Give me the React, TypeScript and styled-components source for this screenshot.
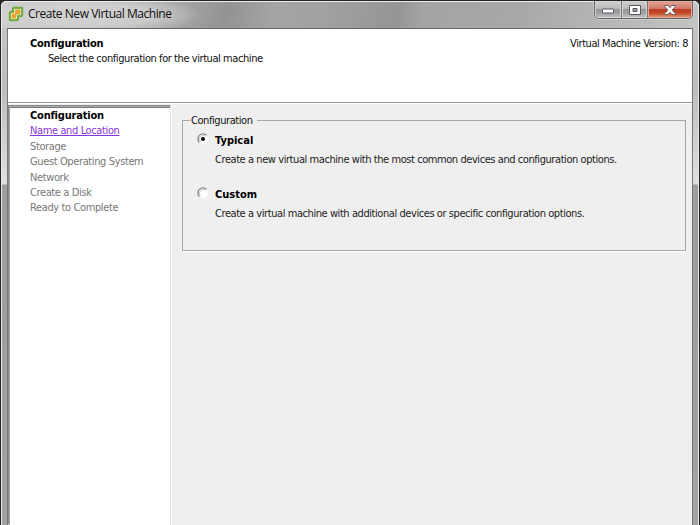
import React from 'react';
import styled, { createGlobalStyle } from 'styled-components';

const GlobalStyle = createGlobalStyle`
  * { box-sizing: border-box; }
  html, body { margin: 0; width: 700px; height: 525px; overflow: hidden; }
  body { font: 11px/15px "DejaVu Sans Condensed", "DejaVu Sans", sans-serif; font-stretch: condensed; color: #101010; background: #242222; }
`;

const Window = styled.div`
  width: 700px;
  height: 525px;
  display: flex;
  flex-direction: column;
  overflow: hidden;
  background: #efefef;
  border: solid #242222;
  border-width: 1px 1px 0;
  border-radius: 6px 6px 0 0;
`;

const TitleBar = styled.header`
  height: 27px;
  flex: none;
  display: flex;
  align-items: flex-start;
  padding: 0 5px 0 7px;
  border: solid #eeeeee;
  border-width: 1px 1px 0;
  border-radius: 5px 5px 0 0;
  background:
    radial-gradient(ellipse 110px 20px at 90px 13px, #d8d8d8d0 0, #d4d4d4c0 55%, #cccccc00 100%),
    linear-gradient(105deg, #cfcfcf, #a7a7a7 170px, #939393 220px, #a4a4a4 265px, #a2a2a2 310px, #959595 385px, #a4a4a4 410px, #a8a8a8 500px, #b8b8b8 600px, #c4c4c4);
`;

const AppIcon = styled.svg`
  width: 16px;
  height: 16px;
  margin: 4px 4px 0 -1px;
`;

const Title = styled.div`
  flex: 1;
  padding-top: 3px;
  font: 12px/17px "Open Sans", "Noto Sans", sans-serif;
  letter-spacing: -0.46px;
  white-space: nowrap;
  color: #111;
`;

const Controls = styled.div`
  display: flex;
  height: 18px;
  margin: -1px 0 0;
  border: 1px solid #686666;
  border-top: 0;
  border-radius: 0 0 5px 5px;
  overflow: hidden;
  box-shadow: 0 0 0 1px #d7d7d780;
`;

const ControlButton = styled.button<{ $close?: boolean; $width: number }>`
  width: ${p => p.$width}px;
  padding: 0;
  display: flex;
  align-items: center;
  justify-content: center;
  border: 1px solid ${p => (p.$close ? '#e3a798' : '#d4d4d4')};
  background: ${p => p.$close
    ? 'linear-gradient(#dfa093, #d17765 45%, #bd3c25 50%, #c34a2c 75%, #df9270)'
    : 'linear-gradient(#cecece, #b9b9b9 45%, #979797 50%, #a2a2a2 75%, #bebebe)'};
  & + & { box-shadow: -1px 0 #777; margin-left: 1px; }
`;

const Frame = styled.div`
  flex: 1;
  min-height: 0;
  display: flex;
`;

const Edge = styled.div<{ $side: 'left' | 'right' }>`
  width: 7px;
  flex: none;
  border: solid;
  border-width: 0 1px;
  border-left-color: ${p => (p.$side === 'left' ? '#e8e8e8' : '#777777')};
  border-right-color: ${p => (p.$side === 'left' ? '#777777' : '#e8e8e8')};
  background: linear-gradient(#c4c4c4 0, #bdbdbd 60px, #e0dfdf 156px, #9f9d9d 157px, #a3a1a1 100%);
`;

const Client = styled.main`
  flex: 1;
  min-width: 0;
  display: flex;
  flex-direction: column;
  border-top: 1px solid #656565;
`;

const PageHeader = styled.section`
  height: 74px;
  flex: none;
  display: flex;
  justify-content: space-between;
  padding: 7px 4px 0 22px;
  background: white;
  border-bottom: 1px solid #999;
  box-shadow: 0 1px white;
`;

const Text = styled.div<{ $indent?: number }>`
  letter-spacing: -0.43px;
  padding-left: ${p => p.$indent ?? 0}px;
  white-space: nowrap;
`;

const Strong = styled(Text)`
  font-weight: bold;
  letter-spacing: -0.24px;
  color: #000;
`;

const OptionTitle = styled(Strong)`
  letter-spacing: 0;
`;

const Body = styled.div`
  flex: 1;
  min-height: 0;
  display: flex;
  padding-top: 3px;
`;

const Sidebar = styled.nav`
  width: 164px;
  flex: none;
  background: white;
  border-left: 1px solid #e3e3e3;
  border-right: 1px solid #fff;
`;

const Steps = styled.div`
  height: 100%;
  padding: 1px 0 0 20px;
  border: solid #a8a8a8;
  border-width: 1px 1px 0;
  border-right-color: #e0e0e0;
  box-shadow: inset 0 1px #777, -1px -1px #8a8a8a;
`;

const Step = styled(Text)`
  height: 15.4px;
  letter-spacing: -0.38px;
  color: #777;
`;

const CurrentStep = styled(Step)`
  font-weight: bold;
  letter-spacing: -0.2px;
  color: #000;
`;

const StepLink = styled(Step)`
  color: #8b35d8;
  text-decoration: underline;
  text-underline-offset: 1px;
`;

const Content = styled.section`
  flex: 1;
  padding: 7px 6px 0 10px;
`;

const Group = styled.fieldset`
  height: 138px;
  margin: 0;
  padding: 0 14px;
  border: 1px solid #a8a8a8;
  box-shadow: 0 1px white;
`;

const Legend = styled.legend`
  height: 15px;
  margin-left: -7px;
  padding: 0 4px 0 1px;
`;

const Option = styled.label`
  display: grid;
  grid-template-columns: 18px 1fr;
  row-gap: 4px;
  height: 54px;
  align-content: start;
  padding-top: 5px;
`;

const Radio = styled.svg`
  width: 12px;
  height: 12px;
`;

const Description = styled(Text)`
  grid-column: 2;
  color: #222;
`;

const RadioMark = ({ checked }: { checked?: boolean }) => (
  <Radio viewBox="0 0 12 12" role="radio" aria-checked={!!checked}>
    <circle cx="6" cy="6" r="5" fill="white" />
    <path d="M2.4 9.6A5 5 0 0 1 9.6 2.4" fill="none" stroke="#858585" strokeWidth="1.3" />
    <path d="M3.2 8.8A4 4 0 0 1 8.8 3.2" fill="none" stroke="#aaa" strokeWidth=".7" />
    {checked && <circle cx="6" cy="6" r="2" fill="#000" />}
  </Radio>
);

export default function App() {
  return (
    <>
      <GlobalStyle />
      <Window>
        <TitleBar>
          <AppIcon viewBox="0 0 16 16" fill="none">
            <path d="M6 1.8h7.2q1 0 1 1v5.5q0 2-2 2H10v2q0 2-2 2H2.8q-1 0-1-1V7.8q0-2 2-2H5v-3q0-1 1-1Z" fill="#eee8bd" stroke="#5b9b27" strokeWidth="2" />
            <path d="M6 1.8h7.2q1 0 1 1v5.5q0 2-2 2H10v2q0 2-2 2H2.8q-1 0-1-1V7.8q0-2 2-2H5v-3q0-1 1-1Z" stroke="#8bc653" strokeWidth=".7" />
            <path d="M7.5 4h4.4v4H9L7.5 9.3V12H4V8.2h3L8.5 7h-1Z" fill="#eba42a" stroke="#d88718" strokeWidth=".5" />
          </AppIcon>
          <Title>Create New Virtual Machine</Title>
          <Controls>
            <ControlButton $width={26} aria-label="Minimize">
              <svg width="12" height="9"><rect x=".5" y="4" width="11" height="4" rx=".5" fill="#fff" stroke="#555965" /></svg>
            </ControlButton>
            <ControlButton $width={25} aria-label="Maximize">
              <svg width="12" height="10"><path d="M.5.5h11v9H.5Zm3.5 3v3h4v-3Z" fill="#fff" fillRule="evenodd" stroke="#555965" /></svg>
            </ControlButton>
            <ControlButton $width={44} $close aria-label="Close">
              <svg width="12" height="10"><path d="M.7.5h3.4L6 2.7 7.9.5h3.4v1L8.2 5l3.1 3.5v1H7.9L6 7.3 4.1 9.5H.7v-1L3.8 5 .7 1.5Z" fill="#fff" stroke="#65545a" strokeWidth=".9" /></svg>
            </ControlButton>
          </Controls>
        </TitleBar>
        <Frame>
          <Edge $side="left" />
          <Client>
            <PageHeader>
              <div>
                <Strong>Configuration</Strong>
                <Text $indent={18}>Select the configuration for the virtual machine</Text>
              </div>
              <Text>Virtual Machine Version: 8</Text>
            </PageHeader>
            <Body>
              <Sidebar>
                <Steps>
                  <CurrentStep>Configuration</CurrentStep>
                  <StepLink>Name and Location</StepLink>
                  <Step>Storage</Step>
                  <Step>Guest Operating System</Step>
                  <Step>Network</Step>
                  <Step>Create a Disk</Step>
                  <Step>Ready to Complete</Step>
                </Steps>
              </Sidebar>
              <Content>
                <Group>
                  <Legend><Text>Configuration</Text></Legend>
                  <Option>
                    <RadioMark checked />
                    <OptionTitle>Typical</OptionTitle>
                    <Description>Create a new virtual machine with the most common devices and configuration options.</Description>
                  </Option>
                  <Option>
                    <RadioMark />
                    <OptionTitle>Custom</OptionTitle>
                    <Description>Create a virtual machine with additional devices or specific configuration options.</Description>
                  </Option>
                </Group>
              </Content>
            </Body>
          </Client>
          <Edge $side="right" />
        </Frame>
      </Window>
    </>
  );
}
